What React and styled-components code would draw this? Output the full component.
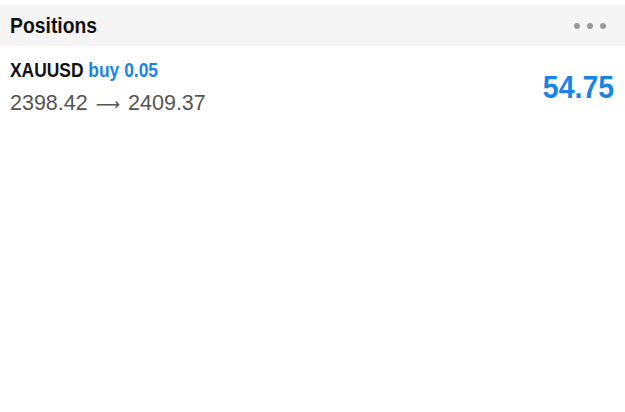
import React from 'react';
import styled, { createGlobalStyle } from 'styled-components';

const GlobalStyle = createGlobalStyle`
    html, body {
        margin: 0;
        padding: 0;
        background: #ffffff;
    }
`;

const Page = styled.div`
    width: 625px;
    height: 412px;
    padding-top: 5px;
    box-sizing: border-box;
    background: #ffffff;
    font-family: 'Liberation Sans', Arial, sans-serif;
`;

// no narrow face installed, so the condensed bold is squeezed by hand
const Narrow = styled.span`
    display: inline-block;
    white-space: nowrap;
    transform: scaleX(${(p) => p.scale || 0.88});
    transform-origin: ${(p) => (p.right ? 'right' : 'left')} center;
`;

const Header = styled.div`
    height: 41px;
    display: flex;
    align-items: center;
    justify-content: space-between;
    padding: 0 19px 0 10px;
    background: #f5f5f5;
`;

const Title = styled.h2`
    margin: 0;
    font-size: 22px;
    font-weight: 700;
    color: #111111;
`;

const Dots = styled.div`
    display: flex;
    gap: 7px;
`;

const Dot = styled.span`
    width: 6px;
    height: 6px;
    border-radius: 50%;
    background: #9a9a9a;
`;

const Row = styled.div`
    display: flex;
    align-items: center;
    justify-content: space-between;
    padding: 12px 11px 0 10px;
`;

const Info = styled.div`
    display: flex;
    flex-direction: column;
`;

const Symbol = styled.div`
    font-size: 19.8px;
    line-height: 24px;
    font-weight: 700;
    color: #111111;
`;

const Side = styled.span`
    color: ${(p) => p.color};
`;

const Prices = styled.div`
    margin-top: 8px;
    font-size: 21.5px;
    line-height: 26px;
    color: #555555;
`;

const Arrow = styled.span`
    font-family: 'DejaVu Sans', sans-serif;
    font-size: 17px;
    margin: 0 2px;
`;

const Profit = styled.div`
    font-size: 32px;
    font-weight: 700;
    color: ${(p) => p.color};
`;

const position = {
    symbol: 'XAUUSD',
    side: 'buy',
    volume: '0.05',
    open: '2398.42',
    current: '2409.37',
    profit: '54.75',
};

export default function App() {
    return (
        <Page>
            <GlobalStyle />
            <Header>
                <Title>
                    <Narrow>Positions</Narrow>
                </Title>
                <Dots>
                    <Dot />
                    <Dot />
                    <Dot />
                </Dots>
            </Header>
            <Row>
                <Info>
                    <Symbol>
                        <Narrow>
                            {position.symbol}{' '}
                            <Side color="#1a84e8">
                                {position.side} {position.volume}
                            </Side>
                        </Narrow>
                    </Symbol>
                    <Prices>
                        {position.open} <Arrow>⟶</Arrow> {position.current}
                    </Prices>
                </Info>
                <Profit color="#1a84e8">
                    <Narrow right scale={0.89}>{position.profit}</Narrow>
                </Profit>
            </Row>
        </Page>
    );
}
